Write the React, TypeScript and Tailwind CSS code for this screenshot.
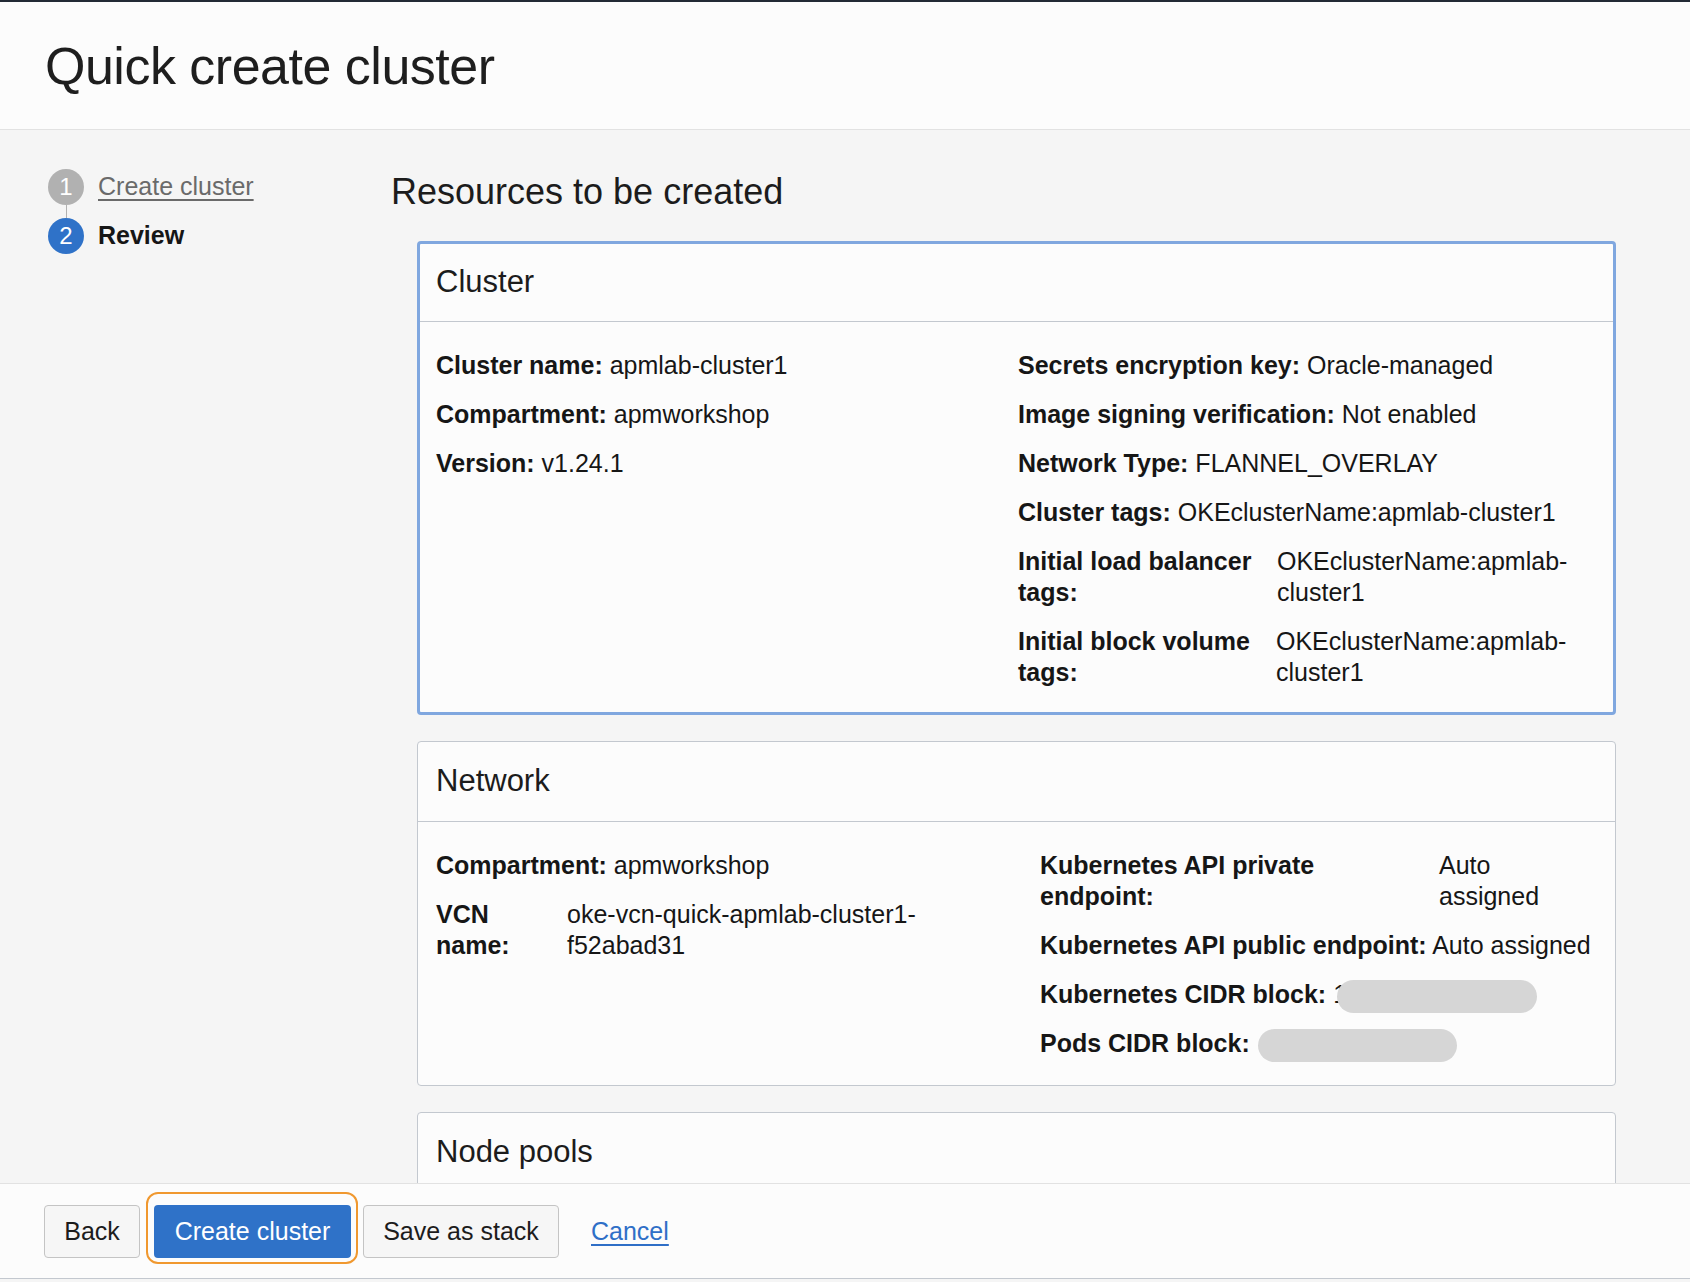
import React from "react";

const font = { fontFamily: '"Liberation Sans", Arial, sans-serif' };

const Row = ({ label, children }: { label: React.ReactNode; children: React.ReactNode }) => (
  <div className="leading-[31px]">
    <span className="font-bold">{label}</span> {children}
  </div>
);

const SplitRow = ({
  label,
  children,
  labelW,
}: {
  label: React.ReactNode;
  children: React.ReactNode;
  labelW: string;
}) => (
  <div className="flex leading-[31px]">
    <div className={`font-bold shrink-0 ${labelW}`}>{label}</div>
    <div>{children}</div>
  </div>
);

const Pill = ({ w }: { w: string }) => (
  <span className={`inline-block align-middle h-[33px] rounded-full bg-[#d6d6d6] ${w}`} />
);

const Card = ({
  title,
  focused,
  children,
}: {
  title: string;
  focused?: boolean;
  children?: React.ReactNode;
}) => (
  <div
    className={
      "bg-[#fcfcfc] rounded-[4px] " +
      (focused ? "border-[3px] border-[#80a7df]" : "border border-[#c3c8cf]")
    }
  >
    <div
      className={
        "flex items-center border-b border-[#c3c8cf] text-[31px] text-[#1c1c1c] " +
        (focused ? "h-[78px] px-[16px]" : "h-[80px] px-[18px]")
      }
    >
      {title}
    </div>
    {children}
  </div>
);

export default function App() {
  return (
    <div className="h-[1282px] w-full flex flex-col bg-[#f5f5f5] text-[#161616] overflow-hidden" style={font}>
      <div className="h-[2px] bg-[#222a35]" />
      <header className="h-[128px] shrink-0 bg-[#fcfcfc] border-b border-[#e2e2e2] flex items-center px-[45px]">
        <h1 className="text-[52px] tracking-[-0.5px] text-[#1e1e1e] leading-none">Quick create cluster</h1>
      </header>

      <main className="flex-1 flex overflow-hidden">
        <aside className="w-[391px] shrink-0 pl-[48px] pt-[39px]">
          <div className="flex items-center gap-[14px] h-[36px]">
            <span className="w-[36px] h-[36px] rounded-full bg-[#b1b1b1] text-white text-[24px] flex items-center justify-center">
              1
            </span>
            <a href="#" className="text-[25px] text-[#6a6a6a] underline underline-offset-[4px]">
              Create cluster
            </a>
          </div>
          <div className="ml-[17.5px] w-px h-[13px] bg-[#b1b1b1]" />
          <div className="flex items-center gap-[14px] h-[36px]">
            <span className="w-[36px] h-[36px] rounded-full bg-[#2f72c8] text-white text-[24px] flex items-center justify-center">
              2
            </span>
            <span className="text-[25px] font-bold">Review</span>
          </div>
        </aside>

        <section className="flex-1 pt-[40px] pr-[74px]">
          <h2 className="text-[36px] leading-[44px] text-[#1c1c1c]">Resources to be created</h2>
          <div className="mt-[27px] ml-[26px] flex flex-col gap-[26px] text-[25px]">
            <Card title="Cluster" focused>
              <div className="grid grid-cols-[582px_1fr] px-[16px] pt-[28px] pb-[24px]">
                <div className="flex flex-col gap-[18px]">
                  <Row label="Cluster name:">apmlab-cluster1</Row>
                  <Row label="Compartment:">apmworkshop</Row>
                  <Row label="Version:">v1.24.1</Row>
                </div>
                <div className="flex flex-col gap-[18px]">
                  <Row label="Secrets encryption key:">Oracle-managed</Row>
                  <Row label="Image signing verification:">Not enabled</Row>
                  <Row label="Network Type:">FLANNEL_OVERLAY</Row>
                  <Row label="Cluster tags:">OKEclusterName:apmlab-cluster1</Row>
                  <SplitRow labelW="w-[259px]" label={<>Initial load balancer<br />tags:</>}>
                    OKEclusterName:apmlab-
                    <br />
                    cluster1
                  </SplitRow>
                  <SplitRow labelW="w-[258px]" label={<>Initial block volume<br />tags:</>}>
                    OKEclusterName:apmlab-
                    <br />
                    cluster1
                  </SplitRow>
                </div>
              </div>
            </Card>

            <Card title="Network">
              <div className="grid grid-cols-[604px_1fr] px-[18px] pt-[28px] pb-[26px]">
                <div className="flex flex-col gap-[18px]">
                  <Row label="Compartment:">apmworkshop</Row>
                  <SplitRow labelW="w-[131px]" label={<>VCN<br />name:</>}>
                    oke-vcn-quick-apmlab-cluster1-
                    <br />
                    f52abad31
                  </SplitRow>
                </div>
                <div className="flex flex-col gap-[18px]">
                  <SplitRow labelW="w-[399px]" label={<>Kubernetes API private<br />endpoint:</>}>
                    Auto
                    <br />
                    assigned
                  </SplitRow>
                  <Row label="Kubernetes API public endpoint:">Auto assigned</Row>
                  <div className="flex items-center h-[31px]">
                    <span className="font-bold">Kubernetes CIDR block:</span>
                    <span className="ml-[7px]">1</span>
                    <span className="-ml-[10px]">
                      <Pill w="w-[200px]" />
                    </span>
                  </div>
                  <div className="flex items-center h-[31px]">
                    <span className="font-bold">Pods CIDR block:</span>
                    <span className="ml-[8px]">
                      <Pill w="w-[199px]" />
                    </span>
                  </div>
                </div>
              </div>
            </Card>

            <Card title="Node pools">
              <div className="h-[200px]" />
            </Card>
          </div>
        </section>
      </main>

      <footer className="h-[96px] shrink-0 bg-[#fcfcfc] border-t border-[#e2e2e2] border-b border-b-[#c3c8cf] flex items-start pt-[21px] pl-[44px] text-[25px]">
        <button className="h-[53px] w-[96px] rounded-[4px] border border-[#c4c4c4] bg-[#f6f6f6] text-[#1c1c1c]">
          Back
        </button>
        <div className="relative ml-[14px]">
          <span className="absolute -top-[13px] -bottom-[6px] -left-[8px] -right-[7px] rounded-[12px] border-2 border-[#f0982f]" />
          <button className="relative h-[53px] w-[197px] rounded-[4px] bg-[#2f72c8] text-white">
            Create cluster
          </button>
        </div>
        <button className="ml-[12px] h-[53px] w-[196px] rounded-[4px] border border-[#c4c4c4] bg-[#f6f6f6] text-[#1c1c1c]">
          Save as stack
        </button>
        <a href="#" className="ml-[32px] h-[53px] flex items-center text-[#2f6fc7] underline underline-offset-[4px]">
          Cancel
        </a>
      </footer>
      <div className="h-[3px] bg-[#f5f5f5]" />
    </div>
  );
}
